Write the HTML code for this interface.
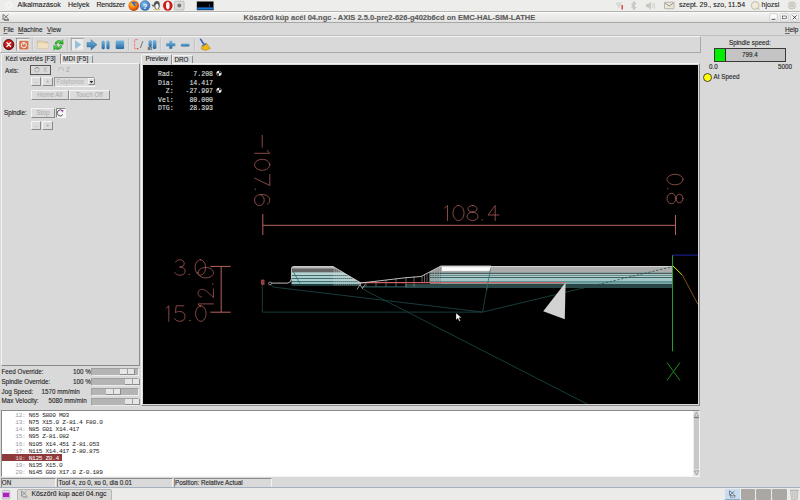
<!DOCTYPE html>
<html><head><meta charset="utf-8">
<style>
*{margin:0;padding:0;box-sizing:border-box}
html,body{width:800px;height:500px;overflow:hidden;background:#d9d9d9;font-family:"Liberation Sans",sans-serif;font-size:6.3px;color:#222}
.a{position:absolute}
.t{position:absolute;white-space:nowrap;line-height:1;-webkit-text-stroke:0.1px currentColor}
u{text-decoration-thickness:0.5px;text-decoration-color:#666;text-underline-offset:0.6px}
.m{font-family:"Liberation Mono",monospace}
.btn{position:absolute;background:#dcdcdc;border:1px solid;border-color:#f4f4f4 #8a8a8a #8a8a8a #f4f4f4;color:#a8a8a8;text-align:center;line-height:8px;font-size:6.3px}
.trough{position:absolute;left:91px;width:48px;height:8px;background:#b4b4b4;border:1px solid;border-color:#a0a0a0 #ececec #ececec #a0a0a0}
.hdl{position:absolute;top:0;height:6px;width:15px;background:#e6e6e6;border-right:1px solid #8c8c8c;border-bottom:1px solid #8c8c8c}
.hdl:after{content:"";position:absolute;left:7px;top:0;width:1px;height:6px;background:#a0a0a0}
.g{position:absolute;left:15.3px;white-space:pre;font-family:"Liberation Mono",monospace;font-size:6.2px;letter-spacing:-0.36px;line-height:7px;color:#1c1c1c}
.g b{font-weight:normal;color:#999}
</style></head><body>
<!-- top gnome panel -->
<div class="a" style="left:0;top:0;width:800px;height:12px;background:#ededeb;border-bottom:1px solid #b4b4b0"></div>
<svg class="a" style="left:0;top:0;z-index:3" width="800" height="23" viewBox="0 0 800 23">
<defs>
<radialGradient id="ff" cx="0.4" cy="0.35" r="0.7"><stop offset="0" stop-color="#ffd040"/><stop offset="0.6" stop-color="#f07010"/><stop offset="1" stop-color="#b03000"/></radialGradient>
<radialGradient id="hb" cx="0.4" cy="0.35" r="0.7"><stop offset="0" stop-color="#8ac0f0"/><stop offset="1" stop-color="#2a66b0"/></radialGradient>
</defs>
<g fill="none" stroke="#fbfbfb" stroke-width="1"><path d="M9,1.6 L12.4,5 L9,8.6 L5.6,5 Z"/></g>
<circle cx="133.7" cy="5.6" r="5.3" fill="url(#ff)"/>
<path d="M131,2.2 Q135,1 137.6,3.6 Q136,2.8 134.2,3.4 Q136.5,4.6 135.5,6.5 Q133,5 131,2.2 Z" fill="#3468b8"/>
<circle cx="145" cy="5.6" r="5" fill="url(#hb)" stroke="#2a5a98" stroke-width="0.4"/>
<text x="142.7" y="8.6" font-size="7.5" font-weight="bold" font-family="Liberation Sans" fill="#fff">?</text>
<ellipse cx="157" cy="5.2" rx="2.8" ry="4.2" fill="#555"/><ellipse cx="157" cy="6.4" rx="1.7" ry="2.6" fill="#f4f4f4"/>
<path d="M153,9.5 Q154.5,8 156,10.5 Z M157.5,10.5 Q159,8 160.8,9.5 Z" fill="#f0c000"/>
<path d="M152,4.5 L153.2,6.5 L155,2.5" fill="none" stroke="#222" stroke-width="0.7"/>
<ellipse cx="167.8" cy="5.6" rx="4.8" ry="5.2" fill="#d01818"/><ellipse cx="167.8" cy="5.6" rx="1.8" ry="3.8" fill="#fff"/>
<rect x="174.5" y="1.2" width="9.6" height="8.8" rx="1" fill="#dcdcdc" stroke="#999" stroke-width="0.5"/><circle cx="179.3" cy="5.6" r="2" fill="#777"/>
<rect x="196.8" y="1.2" width="17" height="9" fill="#000" stroke="#c8c8c8" stroke-width="0.5"/>
<rect x="197.2" y="7.4" width="16.2" height="2.2" fill="#1a78d8"/><path d="M209.5,7.4 V4" stroke="#1a78d8" stroke-width="0.6"/>
<!-- tray -->
<path d="M615.5,2.5 L622,2.5 L619,9 Z" fill="#d8d8d8"/><rect x="621.6" y="5" width="1.2" height="4.5" fill="#d02020"/>
<path d="M633.5,1.5 V9.5 M631.5,3.5 L635.5,7.5 L633.5,9.5 M631.5,7.5 L635.5,3.5 L633.5,1.5" fill="none" stroke="#c4c4bc" stroke-width="1.2"/>
<path d="M646,4 H648 L651,1.8 V9.4 L648,7.2 H646 Z" fill="#c8c8c0"/><path d="M652.2,3.5 Q653.5,5.6 652.2,7.7 M653.8,2.5 Q655.6,5.6 653.8,8.7" fill="none" stroke="#c8c8c0" stroke-width="0.8"/>
<rect x="664.5" y="2.2" width="9.5" height="6.5" rx="0.6" fill="#ebe6d8" stroke="#9a9488" stroke-width="0.6"/><path d="M665,3 L669.2,6 L673.5,3" fill="none" stroke="#555" stroke-width="0.6"/>
<circle cx="755.2" cy="5.5" r="3.9" fill="#efe9d8" stroke="#b8b2a0" stroke-width="0.8"/><path d="M757.5,8 L759.5,9.6" stroke="#b8b2a0" stroke-width="0.9"/>
<circle cx="792" cy="5.4" r="3.9" fill="#c9c6ba"/><path d="M792,2.6 V5.6" stroke="#eee" stroke-width="0.8"/><path d="M790,3.6 A2.6,2.6 0 1 0 794,3.6" fill="none" stroke="#eee" stroke-width="0.7"/>
<!-- window icon -->
<path d="M3,14.2 V20 M3.5,14.5 L8.5,19 M8.5,14.5 L3.5,19" stroke="#444" stroke-width="0.7"/><rect x="4" y="19.2" width="5" height="1.5" fill="#666"/>
<!-- window buttons -->
<rect x="769.8" y="13.6" width="7.4" height="7.4" rx="1" fill="#fafafa" stroke="#b0b0b0" stroke-width="0.5"/><path d="M771.6,19.3 H775.4" stroke="#222" stroke-width="0.8"/>
<rect x="780.6" y="13.6" width="7.6" height="7.4" rx="1" fill="#fafafa" stroke="#b0b0b0" stroke-width="0.5"/><rect x="782.6" y="16" width="3.6" height="2.8" fill="none" stroke="#333" stroke-width="0.6"/>
<rect x="790.8" y="13.6" width="7.6" height="7.4" rx="1" fill="#fafafa" stroke="#b0b0b0" stroke-width="0.5"/><path d="M792.6,15.4 L796.6,19.4 M796.6,15.4 L792.6,19.4" stroke="#222" stroke-width="0.8"/>
</svg>
<div class="t" style="left:17.5px;top:1.3px;font-size:7px">Alkalmazások</div>
<div class="t" style="left:68px;top:1.3px;font-size:7px">Helyek</div>
<div class="t" style="left:96.5px;top:1.3px;font-size:7px;letter-spacing:-0.2px">Rendszer</div>
<div class="t" style="left:679px;top:1.3px;font-size:7px">szept. 29., szo, 11.54</div>
<div class="t" style="left:761.5px;top:1.3px;font-size:7px">hjozsi</div>

<!-- title bar -->
<div class="a" style="left:0;top:12px;width:800px;height:11px;background:linear-gradient(#f2f2f0,#e2e2e0);border-top:1px solid #fafafa;border-bottom:1px solid #a8a8a8"></div>
<div class="t" style="left:243.5px;top:13.6px;font-size:7.5px;font-weight:bold;color:#5a5a5a">Köszörű kúp acél 04.ngc - AXIS 2.5.0-pre2-626-g402b6cd on EMC-HAL-SIM-LATHE</div>

<!-- menu -->
<div class="a" style="left:0;top:23px;width:800px;height:13px;background:#d9d9d9;border-bottom:1px solid #c0c0c0"></div>
<div class="t" style="left:3.5px;top:27.1px;font-size:6.5px"><u>F</u>ile</div>
<div class="t" style="left:18px;top:27.1px;font-size:6.5px"><u>M</u>achine</div>
<div class="t" style="left:47px;top:27.1px;font-size:6.5px"><u>V</u>iew</div>
<div class="t" style="left:785px;top:27.1px;font-size:6.5px"><u>H</u>elp</div>

<!-- toolbar -->
<div class="a" style="left:0;top:36px;width:701px;height:17px;border:1px solid;border-color:#f2f2f2 #a8a8a8 #a8a8a8 #f2f2f2"></div>

<svg class="a" style="left:0;top:36px" width="215" height="17" viewBox="0 36 215 17">
<defs>
<linearGradient id="bl" x1="0" y1="0" x2="0" y2="1"><stop offset="0" stop-color="#7ab8e0"/><stop offset="1" stop-color="#2468a0"/></linearGradient>
<linearGradient id="gr" x1="0" y1="0" x2="0" y2="1"><stop offset="0" stop-color="#60f060"/><stop offset="1" stop-color="#10a010"/></linearGradient>
<radialGradient id="rd" cx="0.45" cy="0.4" r="0.6"><stop offset="0" stop-color="#f04040"/><stop offset="1" stop-color="#a00000"/></radialGradient>
</defs>
<!-- estop -->
<circle cx="8.75" cy="44.6" r="5.1" fill="url(#rd)" stroke="#3a0000" stroke-width="0.8"/>
<path d="M6.9,42.7 L10.6,46.5 M10.6,42.7 L6.9,46.5" stroke="#fff" stroke-width="1.2" stroke-linecap="round"/>
<!-- power pressed -->
<rect x="16.5" y="38.3" width="12.8" height="12.4" fill="#ececec" stroke="#8c8c8c" stroke-width="0.8"/>
<path d="M16.5,50.7 H29.3 V38.3" fill="none" stroke="#fafafa" stroke-width="0.8"/>
<rect x="19.2" y="40.7" width="9.2" height="8.7" rx="1" fill="#d4704a"/>
<circle cx="23.8" cy="45.1" r="2.6" fill="none" stroke="#fff" stroke-width="0.9"/>
<path d="M23.8,42.3 V45" stroke="#fff" stroke-width="0.9"/>
<!-- sep -->
<path d="M32.4,38.5 V50.5" stroke="#a8a8a8" stroke-width="0.7"/><path d="M33.1,38.5 V50.5" stroke="#f4f4f4" stroke-width="0.6"/>
<!-- folder -->
<path d="M37.6,41 H41.5 L42.5,42 H47.8 V48.6 H37.6 Z" fill="#e8d6b0" stroke="#b8a078" stroke-width="0.5"/>
<path d="M37.6,43.5 H48.6 L47.8,48.6 H37.6 Z" fill="#efe0c0"/>
<!-- reload -->
<path d="M55,44 A4,3.8 0 0 1 61.5,41.2 L62.8,39.6 L63.2,44.2 L59,43.8 L60.3,42.5 A2.6,2.4 0 0 0 56.6,44.4 Z" fill="url(#gr)" stroke="#0a700a" stroke-width="0.4"/>
<path d="M61.8,45.6 A4,3.8 0 0 1 55.3,48.6 L54,50.2 L53.6,45.6 L57.8,46 L56.5,47.3 A2.6,2.4 0 0 0 60.2,45.4 Z" fill="url(#gr)" stroke="#0a700a" stroke-width="0.4"/>
<path d="M67.4,38.5 V50.5" stroke="#a8a8a8" stroke-width="0.7"/><path d="M68.1,38.5 V50.5" stroke="#f4f4f4" stroke-width="0.6"/>
<!-- run pressed -->
<rect x="71.2" y="38.3" width="12.5" height="12.4" fill="#ececec" stroke="#8c8c8c" stroke-width="0.8"/>
<path d="M71.2,50.7 H83.7 V38.3" fill="none" stroke="#fafafa" stroke-width="0.8"/>
<path d="M75,40.2 L81.3,44.6 L75,49.2 Z" fill="#94c0dc"/>
<!-- step arrow -->
<path d="M87,42.6 H91 V39.6 L97,44.8 L91,50 V47 H87 Z" fill="url(#bl)" stroke="#2a6a9a" stroke-width="0.4"/>
<!-- pause -->
<rect x="101.6" y="40.4" width="3.2" height="8.8" rx="1.5" fill="url(#bl)"/>
<rect x="106.4" y="40.4" width="3.2" height="8.8" rx="1.5" fill="url(#bl)"/>
<!-- stop -->
<rect x="115.7" y="40.5" width="8.4" height="8.5" rx="1" fill="url(#bl)"/>
<path d="M128.6,38.5 V50.5" stroke="#a8a8a8" stroke-width="0.7"/><path d="M129.3,38.5 V50.5" stroke="#f4f4f4" stroke-width="0.6"/>
<!-- block delete -->
<path d="M138,39.6 H134.6 V48.6 H138" fill="none" stroke="#f07070" stroke-width="0.8" stroke-dasharray="3,0.6"/>
<circle cx="137.8" cy="48.7" r="0.6" fill="#d02020"/>
<path d="M142.8,41.2 L140.4,48" stroke="#444" stroke-width="0.7"/>
<!-- optional stop -->
<rect x="148.6" y="40" width="3.2" height="7" rx="1.5" fill="url(#bl)"/>
<rect x="152.8" y="40" width="3.6" height="9" rx="1.6" fill="url(#bl)"/>
<text x="147.8" y="49.6" font-size="3.2" font-family="Liberation Sans" font-weight="bold" fill="#222">M1</text>
<path d="M160.4,38.5 V50.5" stroke="#a8a8a8" stroke-width="0.7"/><path d="M161.1,38.5 V50.5" stroke="#f4f4f4" stroke-width="0.6"/>
<!-- plus -->
<path d="M169.3,40.8 H172.3 V43.3 H175.3 V46.3 H172.3 V48.8 H169.3 V46.3 H166.3 V43.3 H169.3 Z" fill="url(#bl)"/>
<!-- minus -->
<rect x="180.8" y="43.4" width="8.8" height="3.2" rx="1.4" fill="url(#bl)"/>
<path d="M194.6,38.5 V50.5" stroke="#a8a8a8" stroke-width="0.7"/><path d="M195.3,38.5 V50.5" stroke="#f4f4f4" stroke-width="0.6"/>
<!-- brush -->
<path d="M199.6,39 L201,38.6 L205,44.5 L203.6,45.4 Z" fill="#3060c0"/>
<path d="M202,45.6 L206.2,43 L210.4,48.4 L205.8,50.4 L201.4,49 Z" fill="#f0b810" stroke="#906000" stroke-width="0.4"/>
<path d="M202.2,45.4 L206,43.2 L206.6,44.3 L202.8,46.6 Z" fill="#3a70d0"/>
</svg>

<!-- left notebook -->
<div class="a" style="left:1px;top:53px;width:60px;height:11px;background:#d9d9d9;border:1px solid;border-color:#f4f4f4 #8a8a8a transparent #f4f4f4;border-radius:2px 2px 0 0;z-index:2"></div>
<div class="t" style="left:5.5px;top:55.8px;z-index:3">Kézi vezérlés [F3]</div>
<div class="a" style="left:60.5px;top:54.5px;width:32px;height:9px;background:#d9d9d9;border:1px solid;border-color:#f4f4f4 #8a8a8a transparent #f4f4f4;border-radius:2px 2px 0 0"></div>
<div class="t" style="left:63px;top:56.2px;font-size:6.4px;letter-spacing:0.1px">MDI [F5]</div>
<div class="a" style="left:1px;top:63px;width:139px;height:303px;border:1px solid;border-color:#f4f4f4 #8a8a8a #8a8a8a #f4f4f4"></div>

<div class="t" style="left:5px;top:67.5px">Axis:</div>
<div class="a" style="left:30px;top:65px;width:21px;height:10px;border:1px solid #555"></div>
<svg class="a" style="left:33px;top:66px" width="8" height="8" viewBox="0 0 8 8"><circle cx="4" cy="3.8" r="2.3" fill="none" stroke="#a8a8a8" stroke-width="0.8"/><path d="M2.2,2.6 A2.3,2.3 0 0 1 5.6,2.2" stroke="#777" stroke-width="0.8" fill="none"/></svg>
<div class="t" style="left:43px;top:67px;color:#aaa">X</div>
<svg class="a" style="left:57px;top:66px" width="8" height="8" viewBox="0 0 8 8"><circle cx="4" cy="3.8" r="2.3" fill="none" stroke="#b4b4b4" stroke-width="0.8"/><path d="M2.2,5 A2.3,2.3 0 0 0 5.8,5.2" stroke="#f4f4f4" stroke-width="0.8" fill="none"/></svg>
<div class="t" style="left:66px;top:67px;color:#aaa">Z</div>

<div class="btn" style="left:31px;top:77px;width:10px;height:9px">-</div>
<div class="btn" style="left:42px;top:77px;width:11px;height:9px">+</div>
<div class="btn" style="left:54px;top:76.5px;width:41px;height:10px;text-align:left;padding-left:1.5px;border-color:#9a9a9a #f4f4f4 #f4f4f4 #9a9a9a;color:#b0b0b0">Folytonos</div>
<div class="btn" style="left:87.5px;top:77.8px;width:7px;height:7.5px"></div>
<svg class="a" style="left:87.5px;top:77.8px" width="7" height="8" viewBox="0 0 7 8"><path d="M1.6,3 H5.2 L3.4,5.2 Z" fill="#222"/></svg>
<div class="btn" style="left:31px;top:89.5px;width:37.5px;height:10px">Home All</div>
<div class="btn" style="left:69px;top:89.5px;width:40.5px;height:10px">Touch Off</div>

<div class="t" style="left:4px;top:109.5px">Spindle:</div>
<div class="btn" style="left:31px;top:108px;width:24px;height:10px">Stop</div>
<div class="a" style="left:55.5px;top:108px;width:10px;height:9.5px;background:#f4f4f4;border:1px solid;border-color:#888 #f8f8f8 #f8f8f8 #888"></div>
<svg class="a" style="left:55px;top:108px" width="11" height="10" viewBox="0 0 11 10"><path d="M7.5,3 A3,3 0 1 0 7.8,6.5" fill="none" stroke="#555" stroke-width="1"/><path d="M6.2,1.4 L8.8,2.6 L7,4.6 Z" fill="#b040c0"/></svg>
<div class="btn" style="left:31px;top:121px;width:10px;height:9px">-</div>
<div class="btn" style="left:42px;top:121px;width:11px;height:9px">+</div>

<!-- overrides -->
<div class="t" style="left:1.5px;top:369px">Feed Override:</div>
<div class="t" style="left:73px;top:369px">100 %</div>
<div class="t" style="left:1.5px;top:378.5px">Spindle Override:</div>
<div class="t" style="left:73px;top:378.5px">100 %</div>
<div class="t" style="left:1.5px;top:388.5px">Jog Speed:</div>
<div class="t" style="left:41.5px;top:388.5px">1570 mm/min</div>
<div class="t" style="left:1.5px;top:398px">Max Velocity:</div>
<div class="t" style="left:48.5px;top:398px">5080 mm/min</div>
<div class="trough" style="top:367.5px"><div class="hdl" style="left:28px"></div></div>
<div class="trough" style="top:377.5px"><div class="hdl" style="left:33px"></div></div>
<div class="trough" style="top:387.5px"><div class="hdl" style="left:14px"></div></div>
<div class="trough" style="top:397.5px"><div class="hdl" style="left:33px"></div></div>

<!-- preview notebook -->
<div class="a" style="left:141px;top:53.5px;width:31px;height:11px;background:#d9d9d9;border:1px solid;border-color:#f4f4f4 #8a8a8a transparent #f4f4f4;border-radius:2px 2px 0 0;z-index:2"></div>
<div class="t" style="left:145.5px;top:55.8px;z-index:3">Preview</div>
<div class="a" style="left:172px;top:54.5px;width:21px;height:9px;border:1px solid;border-color:#f4f4f4 #8a8a8a transparent #f4f4f4;border-radius:2px 2px 0 0"></div>
<div class="t" style="left:174.5px;top:56.8px">DRO</div>
<div class="a" style="left:141px;top:63px;width:559px;height:343px;border:1px solid;border-color:#f4f4f4 #8a8a8a #8a8a8a #f4f4f4"></div>
<div class="a" style="left:143px;top:64.5px;width:555px;height:339.5px;background:#000;overflow:hidden">
<svg id="cv" width="555" height="340" viewBox="143 64.5 555 340" style="position:absolute;left:0;top:0">
<defs><linearGradient id="st" gradientUnits="userSpaceOnUse" x1="0" y1="265.5" x2="0" y2="287.5"><stop offset="0.0000" stop-color="#d4d4d4"/><stop offset="0.0364" stop-color="#d4d4d4"/><stop offset="0.0364" stop-color="#acacac"/><stop offset="0.2727" stop-color="#acacac"/><stop offset="0.2727" stop-color="#86a0a0"/><stop offset="0.3182" stop-color="#86a0a0"/><stop offset="0.3182" stop-color="#505858"/><stop offset="0.3636" stop-color="#505858"/><stop offset="0.3636" stop-color="#b0c4c4"/><stop offset="0.4091" stop-color="#b0c4c4"/><stop offset="0.4091" stop-color="#5c9090"/><stop offset="0.4545" stop-color="#5c9090"/><stop offset="0.4545" stop-color="#b0cccc"/><stop offset="0.5000" stop-color="#b0cccc"/><stop offset="0.5000" stop-color="#406060"/><stop offset="0.5455" stop-color="#406060"/><stop offset="0.5455" stop-color="#a4c8c8"/><stop offset="0.6591" stop-color="#a4c8c8"/><stop offset="0.6591" stop-color="#5c9494"/><stop offset="0.7273" stop-color="#5c9494"/><stop offset="0.7273" stop-color="#6c9c9c"/><stop offset="0.7727" stop-color="#6c9c9c"/><stop offset="0.7727" stop-color="#7ca8a8"/><stop offset="0.8409" stop-color="#7ca8a8"/><stop offset="0.8409" stop-color="#284646"/><stop offset="1.0000" stop-color="#284646"/></linearGradient><linearGradient id="stl" gradientUnits="userSpaceOnUse" x1="0" y1="265.8" x2="0" y2="285.2"><stop offset="0.0000" stop-color="#e4e4e4"/><stop offset="0.0412" stop-color="#e4e4e4"/><stop offset="0.0412" stop-color="#b8b8b8"/><stop offset="0.0928" stop-color="#b8b8b8"/><stop offset="0.0928" stop-color="#8c8c8c"/><stop offset="0.1649" stop-color="#8c8c8c"/><stop offset="0.1649" stop-color="#666666"/><stop offset="0.2990" stop-color="#666666"/><stop offset="0.2990" stop-color="#9ab0b0"/><stop offset="0.3402" stop-color="#9ab0b0"/><stop offset="0.3402" stop-color="#b4d4d4"/><stop offset="0.4433" stop-color="#b4d4d4"/><stop offset="0.4433" stop-color="#4a6a6a"/><stop offset="0.4845" stop-color="#4a6a6a"/><stop offset="0.4845" stop-color="#a8d0d0"/><stop offset="0.6082" stop-color="#a8d0d0"/><stop offset="0.6082" stop-color="#4a6a6a"/><stop offset="0.6495" stop-color="#4a6a6a"/><stop offset="0.6495" stop-color="#a8d0d0"/><stop offset="0.7835" stop-color="#a8d0d0"/><stop offset="0.7835" stop-color="#4a6a6a"/><stop offset="0.8247" stop-color="#4a6a6a"/><stop offset="0.8247" stop-color="#90c0c0"/><stop offset="0.9072" stop-color="#90c0c0"/><stop offset="0.9072" stop-color="#1e3c3c"/><stop offset="1.0103" stop-color="#1e3c3c"/></linearGradient></defs>
<g fill="none" stroke="#1c4242" stroke-width="0.9">
<path d="M262.3,284.5 V311.6 H482.5"/>
<path d="M271,284 L273,286.5 L482.5,311.6 L673,266"/>
<path d="M482.5,311.6 L490.5,268"/>
<path d="M361,286 L363.5,289 L589,404.5"/>
</g>
<polygon fill="url(#stl)" points="291.5,267.5 293,266 333,266 361,282.5 361,285.4 291.5,285.4"/>
<path fill="none" stroke="#d0d0d0" stroke-width="0.5" d="M334.2,266.7 V285 M336.2,267.9 V285 M338.2,269.1 V285 M340.2,270.2 V285 M342.2,271.4 V285 M344.2,272.6 V285 M346.2,273.8 V285 M348.2,275.0 V285 M350.2,276.1 V285 M352.2,277.3 V285 M354.2,278.5 V285 M356.2,279.7 V285 M358.2,280.9 V285 M360.2,282.0 V285"/>
<polygon fill="url(#st)" points="441,265.5 673,265.5 673,287.5 441,287.5"/>
<polygon fill="url(#st)" opacity="0.85" points="430,271 441,265.5 441,287.5 405,287.5 405,283.5 430,283.5"/>
<rect x="405" y="284" width="36" height="3.5" fill="#2a4a4a"/>
<path fill="none" stroke="#b0b0b0" stroke-width="0.55" d="M422.0,275.5 V282 M424.5,274.2 V282 M427.0,272.9 V282 M429.5,271.5 V282 M432.0,270.2 V282 M434.5,268.9 V282 M437.0,267.6 V282 M439.5,266.3 V282 M366,281.9 V286 M376,280.6 V286 M386,279.4 V286 M396,278.1 V286 M406,276.9 V286 M414,275.9 V286"/>
<path fill="none" stroke="#3c7a7a" stroke-width="0.9" d="M362,286.4 H405"/>
<rect x="442" y="266.6" width="48.5" height="3.8" fill="#fcfcfc"/>
<path d="M361,282.1 H565.5" stroke="#cc6262" stroke-width="1.15"/>
<path fill="none" stroke="#d0d0d0" stroke-width="0.9" d="M271,282.6 H288 Q291,282 291.5,278 V268 Q291.5,266 293.5,266 H333 L361,282.5 L405,277.3 L421,276 L441,265.5 H491"/>
<path fill="none" stroke="#c8c8c8" stroke-width="0.7" d="M357,289 L360,284 L362.5,288 L365,284"/>
<path fill="none" stroke="#2a5050" stroke-width="0.8" stroke-dasharray="2.5,1.5" d="M590,286 L673,266"/><path fill="none" stroke="#3a7070" stroke-width="0.8" d="M486.5,290 L490.5,268"/>
<circle cx="270" cy="283" r="1.4" fill="none" stroke="#aaa" stroke-width="0.8"/>
<path fill="none" stroke="#2e6a6a" stroke-width="0.8" d="M292,269 L300,283"/>
<rect x="261.2" y="279.2" width="3.2" height="5" fill="#d05a5a"/><path d="M261.8,279.6 L263.8,283.8 M263.8,279.6 L261.8,283.8" stroke="#401010" stroke-width="0.5"/>
<polygon fill="#d2d2d2" points="565.6,282 543.2,310.8 564.8,318.8"/>
<path d="M672.5,254.6 V350.8" stroke="#28a028" stroke-width="1" fill="none"/>
<path d="M672.5,254.6 H698" stroke="#2020a8" stroke-width="1" fill="none"/>
<path d="M673,265.5 L682.4,274.6" stroke="#e8e800" stroke-width="1" fill="none"/>
<path d="M682.4,274.6 L698,304" stroke="#8a5a14" stroke-width="0.9" fill="none"/>
<path d="M667,362 L680,380 M680,362 L667,380" stroke="#209820" stroke-width="0.9" fill="none"/>
<path d="M456,312.5 L456,319.5 L457.8,317.8 L459.3,320.8 L460.4,320.3 L459,317.3 L461.5,317.3 Z" fill="#fff" stroke="#222" stroke-width="0.4"/>
<g fill="none" stroke="#b6625e" stroke-width="0.75" stroke-linecap="round" stroke-linejoin="round">
<g transform="translate(444.1,205) scale(1,0.97)"><path transform="translate(0.00,0) scale(1.0,1)" d="M0.5,2.6 L3.4,0 L3.4,15.5"/><path transform="translate(8.90,0) scale(1.0,1)" d="M5.5,0 C8.5,0 11,3.5 11,7.75 C11,12 8.5,15.5 5.5,15.5 C2.5,15.5 0,12 0,7.75 C0,3.5 2.5,0 5.5,0 Z"/><path transform="translate(22.90,0) scale(1.0,1)" d="M5.5,0 C8,0 10,1.5 10,3.4 C10,5.3 8,6.8 5.5,6.8 C3,6.8 1,5.3 1,3.4 C1,1.5 3,0 5.5,0 Z M5.5,6.8 C8.5,6.8 11,8.8 11,11.2 C11,13.6 8.5,15.5 5.5,15.5 C2.5,15.5 0,13.6 0,11.2 C0,8.8 2.5,6.8 5.5,6.8 Z"/><path transform="translate(37.40,0) scale(1.0,1)" d="M0.2,14.8 L1.0,14.8"/><path transform="translate(43.90,0) scale(1.0,1)" d="M7.2,15.5 L7.2,0 L0,9.8 L10.8,9.8"/></g>
<g transform="translate(269.8,134.8) rotate(90) scale(1,0.98)"><path transform="translate(0.00,0) scale(1.0,1)" d="M0,7.75 L12,7.75"/><path transform="translate(14.60,0) scale(1.0,1)" d="M0.5,2.6 L3.4,0 L3.4,15.5"/><path transform="translate(24.00,0) scale(1.0,1)" d="M5.5,0 C8.5,0 11,3.5 11,7.75 C11,12 8.5,15.5 5.5,15.5 C2.5,15.5 0,12 0,7.75 C0,3.5 2.5,0 5.5,0 Z"/><path transform="translate(39.20,0) scale(1.0,1)" d="M0,0 L11,0 L3.6,15.5"/><path transform="translate(53.40,0) scale(1.0,1)" d="M0.2,14.8 L1.0,14.8"/><path transform="translate(59.20,0) scale(1.0,1)" d="M9.6,2.3 C8.8,0.8 7.3,0 5.5,0 C2,0 0,3.2 0,8.6 C0,13 2.2,15.5 5.5,15.5 C8.8,15.5 11,13.4 11,10.5 C11,7.6 8.8,5.7 5.5,5.7 C2.6,5.7 0.6,7.4 0,10"/></g>
<g transform="translate(683,173.8) rotate(90) scale(0.95,1.03)"><path transform="translate(0.00,0) scale(1.0,1)" d="M5.5,0 C8.5,0 11,3.5 11,7.75 C11,12 8.5,15.5 5.5,15.5 C2.5,15.5 0,12 0,7.75 C0,3.5 2.5,0 5.5,0 Z"/><path transform="translate(14.40,0) scale(1.0,1)" d="M0.2,14.8 L1.0,14.8"/><path transform="translate(20.00,0) scale(1.0,1)" d="M5.5,0 C8,0 10,1.5 10,3.4 C10,5.3 8,6.8 5.5,6.8 C3,6.8 1,5.3 1,3.4 C1,1.5 3,0 5.5,0 Z M5.5,6.8 C8.5,6.8 11,8.8 11,11.2 C11,13.6 8.5,15.5 5.5,15.5 C2.5,15.5 0,13.6 0,11.2 C0,8.8 2.5,6.8 5.5,6.8 Z"/></g>
<g transform="translate(174.7,259.2) scale(0.95,1.0)"><path transform="translate(0.00,0) scale(1.0,1)" d="M0.8,2.4 C1.8,0.8 3.4,0 5.5,0 C8.4,0 10,1.7 10,3.9 C10,6 8.2,7.3 5,7.3 C9,7.3 11,9 11,11.3 C11,14 8.8,15.5 5.5,15.5 C3,15.5 1.2,14.6 0,12.8"/><path transform="translate(14.80,0) scale(1.0,1)" d="M0.2,14.8 L1.0,14.8"/><path transform="translate(21.50,0) scale(1.0,1)" d="M5.5,0 C8.5,0 11,3.5 11,7.75 C11,12 8.5,15.5 5.5,15.5 C2.5,15.5 0,12 0,7.75 C0,3.5 2.5,0 5.5,0 Z"/></g>
<g transform="translate(165.6,305.3) scale(0.95,1.0)"><path transform="translate(0.00,0) scale(1.0,1)" d="M0.5,2.6 L3.4,0 L3.4,15.5"/><path transform="translate(9.50,0) scale(1.0,1)" d="M9.8,0 L1.6,0 L0.9,6.9 C2.2,6 3.7,5.7 5.3,5.7 C8.8,5.7 11,7.7 11,10.6 C11,13.6 8.8,15.5 5.5,15.5 C3,15.5 1.2,14.6 0,12.8"/><path transform="translate(24.90,0) scale(1.0,1)" d="M0.2,14.8 L1.0,14.8"/><path transform="translate(31.60,0) scale(1.0,1)" d="M5.5,0 C8.5,0 11,3.5 11,7.75 C11,12 8.5,15.5 5.5,15.5 C2.5,15.5 0,12 0,7.75 C0,3.5 2.5,0 5.5,0 Z"/></g>
<g transform="translate(198,306.8) rotate(-90)"><path transform="translate(0.00,0) scale(1,1)" d="M0.5,2.6 L3.4,0 L3.4,15.5"/><path transform="translate(9.80,0) scale(0.78,1)" d="M0.6,3.8 C0.9,1.3 2.8,0 5.5,0 C8.6,0 10.5,1.8 10.5,4.2 C10.5,6.2 9.2,7.6 6.5,10 L0,15.5 L11,15.5"/><path transform="translate(22.80,0) scale(1,1)" d="M0.2,14.8 L1.0,14.8"/><path transform="translate(29.40,0) scale(0.95,1)" d="M5.5,0 C8.5,0 11,3.5 11,7.75 C11,12 8.5,15.5 5.5,15.5 C2.5,15.5 0,12 0,7.75 C0,3.5 2.5,0 5.5,0 Z"/></g>
</g>
<g fill="none" stroke="#b6625e" stroke-width="1">
<path d="M262.8,213.5 V234.5 M262.8,224.8 H675.5 M675.5,214.5 V234.5"/>
<path d="M210.4,265.9 H230.7 M210.4,311.7 H230.7 M221.2,265.9 V311.7"/>
</g>
</svg>
</div>

<div class="a m" style="left:158px;top:71px;white-space:pre;font-size:6.55px;line-height:8.5px;font-weight:normal;-webkit-text-stroke:0.1px #d8d8d8;color:#e0e0e0;z-index:5">Rad:     7.208
Dia:    14.417
  Z:   -27.997
Vel:    80.000
DTG:    28.393</div>
<svg class="a" style="left:215.5px;top:70px;z-index:5" width="7" height="7" viewBox="0 0 7 7"><circle cx="3" cy="3.3" r="2.6" fill="#eee"/><path d="M3,0.7 A2.6,2.6 0 0 1 5.6,3.3 H3 Z M3,5.9 A2.6,2.6 0 0 1 0.4,3.3 H3 Z" fill="#333"/></svg>
<svg class="a" style="left:215.5px;top:87px;z-index:5" width="7" height="7" viewBox="0 0 7 7"><circle cx="3" cy="3.3" r="2.6" fill="#eee"/><path d="M3,0.7 A2.6,2.6 0 0 1 5.6,3.3 H3 Z M3,5.9 A2.6,2.6 0 0 1 0.4,3.3 H3 Z" fill="#333"/></svg>

<!-- right panel -->
<div class="t" style="left:729px;top:40px">Spindle speed:</div>
<div class="a" style="left:714px;top:48px;width:72px;height:14px;background:#c4c4c4;border:1px solid #3a3a3a"></div>
<div class="a" style="left:715px;top:49px;width:11px;height:12px;background:#00ee00;border-right:1px solid #222"></div>
<div class="t" style="left:742px;top:52px">799.4</div>
<div class="t" style="left:709px;top:63.5px">0.0</div>
<div class="t" style="left:778px;top:63.5px">5000</div>
<div class="a" style="left:702.5px;top:72.5px;width:9.5px;height:9.5px;border-radius:50%;background:#ffff00;border:1px solid #444"></div>
<div class="t" style="left:713.5px;top:74px">At Speed</div>

<!-- gcode -->
<div class="a" style="left:1px;top:410px;width:699px;height:67px;background:#fff;border:1px solid;border-color:#8a8a8a #f4f4f4 #f4f4f4 #8a8a8a"></div>
<div class="a" style="left:2px;top:454.2px;width:60px;height:7.2px;background:#8f3a3a"></div>
<div class="g" style="top:412px"><b>12: </b>N65 S800 M03</div>
<div class="g" style="top:419px"><b>13: </b>N75 X15.0 Z-81.4 F80.0</div>
<div class="g" style="top:426px"><b>14: </b>N85 G01 X14.417</div>
<div class="g" style="top:433px"><b>15: </b>N95 Z-81.082</div>
<div class="g" style="top:441px"><b>16: </b>N105 X14.451 Z-81.053</div>
<div class="g" style="top:448px"><b>17: </b>N115 X14.417 Z-80.875</div>
<div class="g" style="top:455px;color:#fff"><b style="color:#e8d0d0">18: </b>N125 Z0.4</div>
<div class="g" style="top:462px"><b>19: </b>N135 X15.0</div>
<div class="g" style="top:469px"><b>20: </b>N145 G00 X17.0 Z-0.189</div>
<div class="a" style="left:693px;top:411px;width:6.4px;height:65px;background:#c8c8c8;border-left:1px solid #eee"></div>
<svg class="a" style="left:693px;top:411px" width="7" height="65" viewBox="0 0 7 65"><rect x="0.5" y="0" width="6" height="7" fill="#e0e0e0"/><path d="M3.5,1.2 L5.6,5.2 H1.4 Z" fill="none" stroke="#777" stroke-width="0.6"/><path d="M1,6.6 H6" stroke="#555" stroke-width="0.8"/><rect x="0.5" y="58" width="6" height="7" fill="#e0e0e0"/><path d="M3.5,63.8 L5.6,59.8 H1.4 Z" fill="none" stroke="#777" stroke-width="0.6"/></svg>

<!-- status bar -->
<div class="a" style="left:1px;top:477.5px;width:55px;height:10px;border:1px solid;border-color:#8a8a8a #f4f4f4 #f4f4f4 #8a8a8a"></div>
<div class="t" style="left:1.8px;top:479.5px">ON</div>
<div class="a" style="left:57px;top:477.5px;width:116px;height:10px;border:1px solid;border-color:#8a8a8a #f4f4f4 #f4f4f4 #8a8a8a"></div>
<div class="t" style="left:58.5px;top:479.5px">Tool 4, zo 0, xo 0, dia 0.01</div>
<div class="a" style="left:174px;top:477.5px;width:98px;height:10px;border:1px solid;border-color:#8a8a8a #f4f4f4 #f4f4f4 #8a8a8a"></div>
<div class="t" style="left:175px;top:479.5px">Position: Relative Actual</div>

<!-- taskbar -->
<div class="a" style="left:0;top:487px;width:800px;height:13px;background:#ebebe9;border-top:1px solid #a4b0c0"></div>
<div class="a" style="left:17.2px;top:488.8px;width:94.5px;height:12px;background:#d8d8d6;border:1px solid #b4b4b2;border-radius:2px"></div>
<div class="t" style="left:31.5px;top:491.2px;font-size:6.85px">Köszörű kúp acél 04.ngc</div>
<svg class="a" style="left:0;top:487px" width="800" height="13" viewBox="0 487 800 13">
<rect x="2.4" y="490.4" width="7.4" height="8.6" rx="0.8" fill="#e8e0ec" stroke="#908898" stroke-width="0.5"/><rect x="3" y="492.6" width="6.2" height="4.6" fill="#b020c0"/>
<path d="M21.5,490.8 V496.5 M22,491.2 L26.5,495.5 M26.5,491.2 L22,495.5" stroke="#666" stroke-width="0.6"/><rect x="22.5" y="496" width="5" height="1.8" fill="#aaa"/>
<path d="M790.6,490.8 H798 L797.2,499.4 H791.4 Z" fill="#d8d8d6" stroke="#9a9a98" stroke-width="0.5"/><rect x="790" y="489.6" width="8.6" height="1.4" fill="#b8b8b6"/><path d="M792.6,492 V498 M794.3,492 V498 M796,492 V498" stroke="#a8a8a6" stroke-width="0.4"/>
</svg>
<div class="a" style="left:725px;top:489px;width:15px;height:10.5px;background:#c8dcf2;border-bottom:1px solid #8aa8c8"></div>
<div class="a" style="left:740.6px;top:489px;width:14.6px;height:10.5px;background:#aba7a3;border-radius:1px"></div>
<div class="a" style="left:756.2px;top:489px;width:14.8px;height:10.5px;background:#aba7a3;border-radius:1px"></div>
<div class="a" style="left:772px;top:489px;width:14.6px;height:10.5px;background:#aba7a3;border-radius:1px"></div>
<svg class="a" style="left:728px;top:489px" width="9" height="10" viewBox="0 0 9 10"><path d="M1.5,1.5 V6.5 M2,2 L6.5,6 M6.5,2 L2,6" stroke="#444" stroke-width="0.6"/><rect x="2.5" y="6.5" width="4.5" height="1.6" fill="none" stroke="#555" stroke-width="0.5"/></svg>
</body></html>
